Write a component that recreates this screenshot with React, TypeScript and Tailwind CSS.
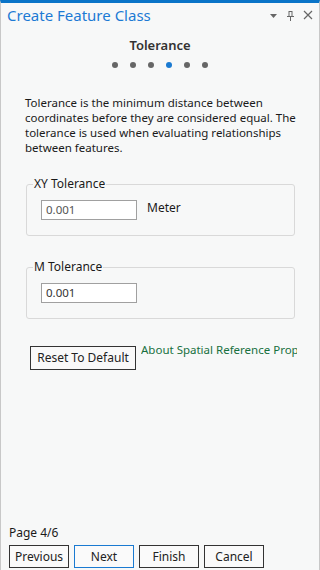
import React from "react";

const font = { fontFamily: '"Noto Sans", "Open Sans", sans-serif' };

function Dots({ active }: { active: number }) {
  return (
    <div className="flex justify-center gap-[12px] mt-[9px]">
      {[0, 1, 2, 3, 4, 5].map((i) => (
        <span
          key={i}
          className={`w-[6px] h-[6px] rounded-full ${i === active ? "bg-[#1a7ad1]" : "bg-[#666666]"}`}
        />
      ))}
    </div>
  );
}

function Group({ label, children }: { label: string; children: React.ReactNode }) {
  return (
    <fieldset className="ml-[25px] mr-[24px] border border-[#d9d9d9] rounded-[3px] px-[6px] pt-[9px] pb-[15px]">
      <legend className="px-[1px] text-[12px] text-[#1a1a1a] leading-[14px]">{label}</legend>
      <div className="ml-[8px]">{children}</div>
    </fieldset>
  );
}

export default function App() {
  return (
    <div
      className="w-[320px] h-[570px] bg-[#f7f8f8] flex flex-col border-t-[3px] border-[#0a74c8] border-x border-x-[#c8c8c8] overflow-hidden"
      style={font}
    >
      {/* Title bar */}
      <div className="flex items-center justify-between pl-[6px] pr-[6px] h-[24px]">
        <span className="text-[15px] text-[#1c7ad4] leading-none">Create Feature Class</span>
        <div className="flex items-center gap-[8px] text-[#666]">
          <svg width="9" height="9" viewBox="0 0 9 9">
            <path d="M1 3 L8 3 L4.5 7 Z" fill="#666" />
          </svg>
          <svg width="9" height="11" viewBox="0 0 9 11">
            <path d="M2.5 1 H6.5 V6 H8 V7 H1 V6 H2.5 Z M3.5 2 V6 H5.5 V2 Z M4 7 V11 H5 V7 Z" fill="#666" />
          </svg>
          <svg width="10" height="10" viewBox="0 0 10 10">
            <path d="M1 1 L9 9 M9 1 L1 9" stroke="#666" strokeWidth="1.2" />
          </svg>
        </div>
      </div>

      {/* Step header */}
      <div className="mt-[10px] text-center text-[13px] font-semibold text-[#333] leading-[16px]">Tolerance</div>
      <Dots active={3} />

      {/* Description */}
      <p className="ml-[24px] mr-[8px] mt-[27px] text-[11.5px] leading-[15px] text-[#1a1a1a]">
        Tolerance is the minimum distance between coordinates before they are considered equal. The tolerance is used
        when evaluating relationships between features.
      </p>

      <div className="mt-[22px]">
        <Group label="XY Tolerance">
          <div className="flex items-center gap-[10px]">
            <div className="w-[96px] h-[20px] bg-white border border-[#a0a0a0] flex items-center px-[4px] text-[11.5px] text-[#555]">
              0.001
            </div>
            <span className="text-[12px] text-[#1a1a1a] -mt-[4px]">Meter</span>
          </div>
        </Group>
      </div>

      <div className="mt-[24px]">
        <Group label="M Tolerance">
          <div className="w-[96px] h-[20px] bg-white border border-[#a0a0a0] flex items-center px-[4px] text-[11.5px] text-[#333]">
            0.001
          </div>
        </Group>
      </div>

      <div className="flex items-start mt-[27px] pl-[29px] pr-[22px] overflow-hidden">
        <button className="shrink-0 w-[106px] h-[24px] border border-[#333] bg-[#f9f9f9] text-[12px] text-[#222]">
          Reset To Default
        </button>
        <span className="ml-[5px] -mt-[5px] text-[11.5px] text-[#18703f] whitespace-nowrap overflow-hidden">
          About Spatial Reference Properties
        </span>
      </div>

      <div className="flex-1" />

      <div className="px-[8px] text-[12px] text-[#1a1a1a] leading-[14px]">Page 4/6</div>
      <div className="flex gap-[5px] px-[8px] mt-[5px] mb-[2px]">
        {["Previous", "Next", "Finish", "Cancel"].map((b) => (
          <button
            key={b}
            className={`w-[60px] h-[23px] border text-[12px] text-[#222] bg-[#fafafa] ${
              b === "Next" ? "border-[#1a7ad1]" : "border-[#333]"
            }`}
          >
            {b}
          </button>
        ))}
      </div>
    </div>
  );
}
